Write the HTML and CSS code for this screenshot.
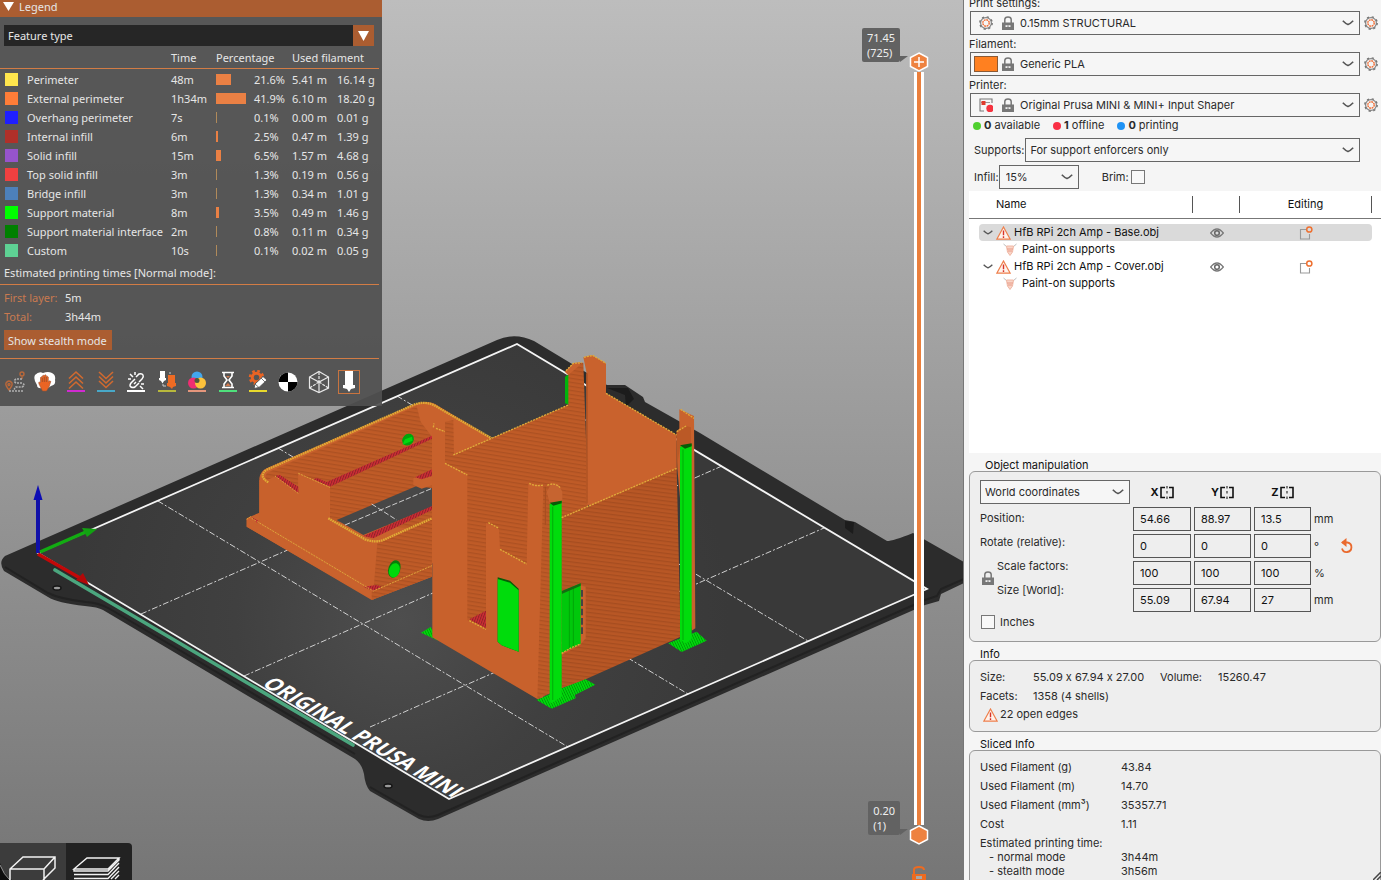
FILE: index.html
```html
<!DOCTYPE html>
<html lang="en">
<head>
<meta charset="utf-8">
<meta name="viewport" content="width=device-width, initial-scale=1">
<title>Slicer preview</title>
<link rel="stylesheet" href="styles.css">
</head>
<body>
<svg class="defs" aria-hidden="true">
  <symbol id="gear" viewBox="0 0 14 14">
    <circle cx="7" cy="7" r="5.4" fill="none" stroke="#858585" stroke-width="1.2"/>
    <circle cx="7" cy="7" r="6.2" fill="none" stroke="#757575" stroke-width="1.4" stroke-dasharray="2.2 2.67"/>
    <circle cx="7" cy="7" r="3.2" fill="none" stroke="#f06a30" stroke-width="1.4" stroke-dasharray="1.8 .7"/>
  </symbol>
  <symbol id="lock" viewBox="0 0 12 14">
    <path d="M2.8 7V3.6Q2.8 1 6 1t3.200 2.600V7" fill="none" stroke="#777" stroke-width="1.500"/>
    <path d="M0 6.500h12V14H0z" fill="#777"/>
    <path d="M3.500 9.200h5v1.800h-5z" fill="#eee"/><path d="M5.500 9.200h1v2.800h-1z" fill="#777"/>
  </symbol>
  <symbol id="chev" viewBox="0 0 12 6"><path d="M.8.8Q4 4 6 4.600 8 4 11.200.8" fill="none" stroke="#555" stroke-width="1.600"/></symbol>
  <symbol id="warn" viewBox="0 0 15 14">
    <path d="M7.500 1 14.200 13.200H.8z" fill="#fff3ec" stroke="#ee7f4c" stroke-width="1.200"/>
    <path d="M7.500 4.500v4.700M7.500 10.300v1.600" stroke="#d8332a" stroke-width="1.400"/>
  </symbol>
  <symbol id="eye" viewBox="0 0 14 10">
    <path d="M.7 5Q7-3 13.300 5 7 13 .7 5z" fill="none" stroke="#777" stroke-width="1.300"/>
    <circle cx="7" cy="5" r="2.300" fill="none" stroke="#666" stroke-width="1.500"/>
  </symbol>
  <symbol id="edit" viewBox="0 0 14 14">
    <path d="M7 3.500H1.500V13H10.500V8" fill="none" stroke="#999" stroke-width="1.100"/>
    <circle cx="10.300" cy="3.500" r="2.600" fill="none" stroke="#ee7030" stroke-width="1.500"/>
  </symbol>
  <symbol id="paint" viewBox="0 0 14 13">
    <path d="M.5 1 4 4M13.500 1 10 4" stroke="#bbb" fill="none"/>
    <path d="M3.500 3h7L9.500 9 7 12.500 4.500 9z" fill="#f9d5c8" stroke="#f0b7a4"/><path d="M4 6h6M5 8h4" stroke="#e89a86"/>
  </symbol>
  <symbol id="mirror" viewBox="0 0 14 13">
    <path d="M5 1.500H1v10h4M9 1.500h4v10H9" fill="none" stroke="#111" stroke-width="1.600"/>
    <path d="M7 0v2.500M7 5v2.500M7 10.500V13" stroke="#333" stroke-width="1.200"/>
  </symbol>
</svg>

<div class="app">
<main class="viewport">
  <svg class="scene" viewBox="0 0 964 880" preserveAspectRatio="xMinYMin slice" role="img" aria-label="Sliced model on the print bed">
    <defs>
      <linearGradient id="sky" x1="0" y1="0" x2="0" y2="1"><stop offset="0" stop-color="#bdbdbd"/><stop offset="1" stop-color="#767676"/></linearGradient>
      <radialGradient id="bed" gradientUnits="userSpaceOnUse" cx="400" cy="620" r="330"><stop offset="0" stop-color="#4e4e4e"/><stop offset=".5" stop-color="#404040"/><stop offset="1" stop-color="#393939"/></radialGradient>
      <pattern id="layers" width="40" height="12" patternUnits="userSpaceOnUse" patternTransform="rotate(9)"><path d="M0 0h40v12H0z" fill="#bf5b27"/><path d="M0 0h40v4H0z" fill="#ad5122"/></pattern>
      <pattern id="layers2" width="40" height="12" patternUnits="userSpaceOnUse" patternTransform="rotate(7)"><path d="M0 0h40v12H0z" fill="#b85725"/><path d="M0 0h40v4H0z" fill="#a64d20"/></pattern>
      <pattern id="hatch" width="7" height="7" patternUnits="userSpaceOnUse" patternTransform="rotate(-25)"><path d="M0 0h7v7H0z" fill="#00d80b"/><path d="M0 0h2v7H0z" fill="#008d08"/></pattern>
      <pattern id="red" width="7" height="7" patternUnits="userSpaceOnUse" patternTransform="rotate(20)"><path d="M0 0h7v7H0z" fill="#d02c36"/><path d="M0 0h3v7H0z" fill="#8e2427"/></pattern>
    </defs>
    <rect width="964" height="880" fill="url(#sky)"/>
    <path d="M5 556 497 340Q515 332 534 341L607 385H625L643 397 645 402 700 433 845 520 855 522 887 541Q893 541 913 533L964 562V583L941 594 939 601 925 605 438 819Q428 823 419 819L370 791Q365 785 364 774 362 764 355 759L260 703 103 610Q98 607 85 606 57 603 48 597L4 571Q-2 562 5 556z" fill="#2c2c2c"/>
    <path d="M5 567 48 593Q60 599 86 602 100 603 110 609L355 754M370 787 419 815Q428 819 438 815L925 600 937 596 941 589 964 579" fill="none" stroke="#222" stroke-width="2"/>
    <path d="M845 521v7l8 6 1-12zM607 388l18 7 1 12 8-8-6-11z" fill="#1c1c1c"/>
    <path d="M38 553 517 344 927 589 449 799z" fill="url(#bed)"/>
    <g stroke="#d0d0d0" stroke-width="1" stroke-dasharray="6 2 2 2" fill="none"><path d="M141 614 620 405M244 676 722 466M370 727 824 528M158 501 568 747M278 448 688 694M397 396 808 641"/></g>
    <path d="M38 553 517 344 927 589 449 799z" fill="none" stroke="#f4f4f4" stroke-width="1.800"/>
    <path d="M55 570 353 745" stroke="#4ba67e" stroke-width="3.600" stroke-linecap="round"/>
    <text class="bed-text" transform="translate(261 685) rotate(30.500) skewX(-26)">ORIGINAL PRUSA MINI</text>
    <g fill="#9a9a9a" stroke="#151515" stroke-width="1.500"><ellipse cx="57" cy="588" rx="4" ry="2"/><ellipse cx="388" cy="786" rx="4" ry="2"/></g>
    <path d="M38 553V499" stroke="#1010a8" stroke-width="4"/><path d="M33.500 500 38 485 42.500 500z" fill="#0c0cb4"/>
    <path d="M40 552 88 531" stroke="#12ac12" stroke-width="3.500"/><path d="M82 528 97 529 87 537z" fill="#12a212"/>
    <path d="M38 554 80 578" stroke="#c20808" stroke-width="3.500"/><path d="M83 573 89 585 76 580z" fill="#b40808"/>

    <g transform="translate(230 330) scale(.333333)">
      <path d="M50 565 88 548V445Q90 425 110 415L545 226Q595 205 625 228L785 325V700H606V740L425 810 50 590z" fill="#c9622d"/>
      <path d="M110 450Q100 435 118 425L560 228 572 275 606 320V600L320 575 300 565V470L205 430V490L135 440z" fill="url(#layers)"/>
      <path d="M320 570 560 468 606 475V530L400 615z" fill="#474747"/>
      <path d="M345 585 606 475M425 522 500 570" stroke="#ccc" stroke-width="3" stroke-dasharray="16 6"/>
      <path d="M550 445 606 420V465L575 476 550 465z" fill="#c9622d"/><path d="M555 442 606 418V438L575 448z" fill="url(#red)"/>
      <path d="M135 438 205 490 200 470 150 436zM250 448 300 470 606 326V317L290 456 262 444z" fill="url(#red)"/>
      <path d="M400 618 606 528V540L430 625z" fill="url(#red)"/>
      <path d="M88 450 115 457 135 440 205 492V430L300 472 295 565 405 630 442 638V782L88 572z" fill="#c8612c"/>
      <path d="M135 438 150 436 205 470V490z" fill="url(#red)"/>
      <path d="M442 638 462 632 606 565V710L430 785z" fill="url(#layers)"/>
      <path d="M50 568 430 788V810L50 590z" fill="#c9622d"/><path d="M425 786 606 707V740L425 810z" fill="url(#layers)"/>
      <path d="M65 562 85 572 82 580zM400 770 440 765 455 770 430 783z" fill="url(#red)"/>
      <g fill="none" stroke="#e0ab35" stroke-width="7" stroke-dasharray="5 2"><path d="M115 457Q85 440 108 420L550 225Q590 208 630 236L785 325M295 565 405 628Q435 639 460 630L606 565"/></g>
      <path d="M135 438 205 490M205 430 300 472M65 565 430 783 606 707M50 568 65 558" fill="none" stroke="#dca43a" stroke-width="3" stroke-dasharray="6 3"/>
      <ellipse cx="534" cy="329" rx="19" ry="16" transform="rotate(-45 534 329)" fill="#00a50b"/><path d="M517 344 548 332 546 320 525 328z" fill="#00d90f"/>
      <ellipse cx="493" cy="717" rx="18" ry="27" transform="rotate(18 493 717)" fill="#087c0a"/><ellipse cx="493" cy="721" rx="16" ry="22" transform="rotate(18 493 721)" fill="#00d80b"/>
    </g>

    <g transform="translate(410 340) scale(.333333)">
      <path d="M33 878 62 861 85 902z" fill="url(#hatch)"/>
      <path d="M465 110 480 100V195L465 190z" fill="#00b30b"/>
      <path d="M105 370 130 345 475 195V105L465 95 490 70 520 68 535 500 455 540 400 700 230 870 170 850V400z" fill="url(#layers)"/>
      <path d="M465 95 490 70 510 66V75L475 105z" fill="#c9622d"/>
      <path d="M520 52 545 45 588 70V160L800 285V390L540 500 530 490V100z" fill="#c9622d"/>
      <path d="M531 100V490" stroke="#b35525" stroke-width="5"/>
      <path d="M455 535 800 385 812 890 500 1030 455 1045z" fill="url(#layers2)"/>
      <path d="M105 245 130 240 132 345 105 370z" fill="url(#layers)"/>
      <path d="M178 838 228 812V865z" fill="url(#red)"/>
      <path d="M67 260 85 270 105 275V370L172 405V840L228 868V548L267 568 270 628 350 672 355 430 400 438V1073L382 1077 67 892z" fill="#c8612c"/>
      <path d="M400 440 420 430 445 433 455 450V1045L382 1077z" fill="url(#layers)"/>
      <path d="M410 455 425 430 445 433 457 455V487L420 492z" fill="#c66430"/>
      <path d="M406 440V555" stroke="#a54e20" stroke-width="3"/>
      <path d="M263 712 300 722 326 746V935L275 916 263 905z" fill="#075c08"/><path d="M263 717 300 728 326 751V935L275 916 263 905z" fill="#00dc0c"/>
      <path d="M510 735 527 740V895L510 915 455 945V935z" fill="#c9622d"/>
      <path d="M455 755 512 730V912L455 940z" fill="#00c80b"/><path d="M478 750V928M490 742V922" stroke="#00a508" stroke-width="3"/><path d="M455 753 512 730V737L455 762z" fill="#136c12"/>
      <path d="M516 750V890" stroke="#444" stroke-width="6" stroke-dasharray="20 8"/>
      <path d="M380 1080 420 1062V1050L455 1045 527 1018 556 1034 495 1065 497 1075 425 1106z" fill="url(#hatch)"/>
      <path d="M419 492 455 483V1070L425 1090 419 1085z" fill="#00dc0c"/><path d="M419 488 455 482V490L430 497z" fill="#075c08"/><path d="M428 500V1080" stroke="#00b70a" stroke-width="4"/>
      <path d="M808 208 852 228 856 865 845 872 802 385 800 275 808 265z" fill="#c9622d"/>
      <path d="M800 275 825 257 843 262V315L810 322 800 385z" fill="#bb5926"/>
      <path d="M775 910 860 875 890 902 815 936z" fill="url(#hatch)"/>
      <path d="M810 320 845 312V898L828 910 810 900z" fill="#00dc0c"/><path d="M810 316 845 310V319L825 326z" fill="#075c08"/><path d="M819 328V900" stroke="#00b70a" stroke-width="4"/>
      <g fill="none" stroke="#e0ab3a" stroke-width="4" stroke-dasharray="6 3"><path d="M130 345 475 195M588 160 800 285M455 533 800 385M105 370 172 405M235 548 267 565M270 628 350 672M178 842 228 868M70 262 72 250M78 265 105 275M358 430Q375 440 400 435M412 436Q435 425 452 445M522 52 548 46 588 70M812 208 852 235M800 275 830 257M468 92 490 70 515 68M455 940 480 925 512 912"/></g>
    </g>
  </svg>

  <section class="legend">
    <h1 class="legend-title"><svg width="11" height="9" viewBox="0 0 11 9"><path d="M0 0h11L5.500 9z" fill="#fff"/></svg>Legend</h1>
    <div class="legend-body">
      <div class="legend-combo">
        <select aria-label="View type"><option>Feature type</option></select>
        <span class="combo-arrow"><svg width="11" height="10" viewBox="0 0 11 10"><path d="M0 0h11L5.500 10z" fill="#fff"/></svg></span>
      </div>
      <table class="features">
        <colgroup><col class="c-sw"><col class="c-name"><col class="c-time"><col class="c-bar"><col class="c-pct"><col class="c-len"><col></colgroup>
        <thead><tr><th></th><th></th><th>Time</th><th colspan="2">Percentage</th><th colspan="2">Used filament</th></tr></thead>
        <tbody>
          <tr><td><i class="sw" style="background:#ffe64d"></i></td><td>Perimeter</td><td>48m</td><td><i class="bar" style="width:15px"></i></td><td>21.6%</td><td>5.41 m</td><td>16.14 g</td></tr>
          <tr><td><i class="sw" style="background:#ff7d38"></i></td><td>External perimeter</td><td>1h34m</td><td><i class="bar" style="width:30px"></i></td><td>41.9%</td><td>6.10 m</td><td>18.20 g</td></tr>
          <tr><td><i class="sw" style="background:#1f1fff"></i></td><td>Overhang perimeter</td><td>7s</td><td><i class="bar thin" style="width:1px"></i></td><td>0.1%</td><td>0.00 m</td><td>0.01 g</td></tr>
          <tr><td><i class="sw" style="background:#b03029"></i></td><td>Internal infill</td><td>6m</td><td><i class="bar" style="width:2px"></i></td><td>2.5%</td><td>0.47 m</td><td>1.39 g</td></tr>
          <tr><td><i class="sw" style="background:#9654cc"></i></td><td>Solid infill</td><td>15m</td><td><i class="bar" style="width:5px"></i></td><td>6.5%</td><td>1.57 m</td><td>4.68 g</td></tr>
          <tr><td><i class="sw" style="background:#f04040"></i></td><td>Top solid infill</td><td>3m</td><td><i class="bar thin" style="width:1px"></i></td><td>1.3%</td><td>0.19 m</td><td>0.56 g</td></tr>
          <tr><td><i class="sw" style="background:#4d80ba"></i></td><td>Bridge infill</td><td>3m</td><td><i class="bar thin" style="width:1px"></i></td><td>1.3%</td><td>0.34 m</td><td>1.01 g</td></tr>
          <tr><td><i class="sw" style="background:#00ff00"></i></td><td>Support material</td><td>8m</td><td><i class="bar" style="width:3px"></i></td><td>3.5%</td><td>0.49 m</td><td>1.46 g</td></tr>
          <tr><td><i class="sw" style="background:#008000"></i></td><td>Support material interface</td><td>2m</td><td><i class="bar thin" style="width:1px"></i></td><td>0.8%</td><td>0.11 m</td><td>0.34 g</td></tr>
          <tr><td><i class="sw" style="background:#5ed194"></i></td><td>Custom</td><td>10s</td><td><i class="bar thin" style="width:1px"></i></td><td>0.1%</td><td>0.02 m</td><td>0.05 g</td></tr>
        </tbody>
      </table>
      <h2 class="times-title">Estimated printing times [Normal mode]:</h2>
      <dl class="times"><dt>First layer:</dt><dd>5m</dd><dt>Total:</dt><dd>3h44m</dd></dl>
      <button class="stealth" type="button">Show stealth mode</button>
      <div class="toggles">
        <button type="button" aria-label="Travel"><svg viewBox="0 0 22 24"><g fill="none" stroke="#b9683a" stroke-width="1.400"><circle cx="18" cy="4" r="2"/><path d="M18 6.500V9M5 20Q1 15 2 13q3-4 6 0 1 2-3 7z"/><circle cx="5" cy="14.500" r="1"/></g><path d="M18 9H12q-3 2 0 4h6q4 2 0 4h-6q-3 2 0 4M5 21h14" fill="none" stroke="#b0b0b0" stroke-width="1.600" stroke-dasharray="2 1"/></svg></button>
        <button type="button" aria-label="Wipe"><svg viewBox="0 0 22 24"><path d="M1 5q4-4 8-2 5-2 9 0 4 2 3 7 1 5-4 6-3 3-8 2-6 1-6-3Q-1 9 1 5z" fill="#fff"/><path d="M5 14q-1-3 1.500-1.500V7.500q.9-1.500 1.800 0V6q1-1.500 2 0V5.500q1-1.500 2 0V7q1-1.500 2 0v5q1.500-2 2.500-.5L15 17l-2.500 4H8.500z" fill="#ea6424" stroke="#9a5433" stroke-width=".6"/><path d="M8.300 8v4M10.300 7v5M12.300 7v5" stroke="#8a4a2a" stroke-width=".7"/></svg></button>
        <button type="button" aria-label="Retractions"><svg viewBox="0 0 22 24"><g fill="none" stroke="#d06a30" stroke-width="1.600"><path d="M4 8.500 11 2l7 6.500M4 13.500 11 7l7 6.500M4 18.500 11 12l7 6.500"/></g><path d="M2 20h18v2H2z" fill="#d02bd0"/></svg></button>
        <button type="button" aria-label="Deretractions"><svg viewBox="0 0 22 24"><g fill="none" stroke="#d06a30" stroke-width="1.600"><path d="M4 2 11 8.500 18 2M4 6.500 11 13l7-6.500M4 11 11 17.500 18 11"/></g><path d="M2 20h18v2H2z" fill="#48a8c8"/></svg></button>
        <button type="button" aria-label="Seams"><svg viewBox="0 0 22 24"><g fill="none" stroke="#fff" stroke-width="1.500"><path d="M11 7 14 4q3-1 4 1 1 2-1 4l-3 3M10 9 6 13q-2 3 0 4t4 0l4-4M9 14l2-2M5 4l3 3M10 2v3M3 9h3M16 14h3M15 16l3 3"/></g><path d="M2 20h18v2H2z" fill="#fff"/></svg></button>
        <button type="button" aria-label="Tool changes"><svg viewBox="0 0 22 24"><path d="M4 1h5v7h1v2L8 11 6.500 13.500 5 11 3 10V8h1z" fill="#fff"/><path d="M12 5h7v8h1v3l-3 1-1 2-2-2-3-1v-3h1z" fill="#ee6b24"/><path d="M7 14v2h3M13 3h2" fill="none" stroke="#ccc"/><path d="M2 20h18v2H2z" fill="#b8b83c"/></svg></button>
        <button type="button" aria-label="Color changes"><svg viewBox="0 0 22 24"><circle cx="11" cy="7" r="5.500" fill="#42a7ee"/><circle cx="7.500" cy="13" r="5.500" fill="#f02d72"/><circle cx="14.500" cy="13" r="5.500" fill="#fcc23b"/><circle cx="11" cy="10.500" r="2.500" fill="#51583a"/><path d="M2 20h18v2H2z" fill="#e5967c"/></svg></button>
        <button type="button" aria-label="Pause prints"><svg viewBox="0 0 22 24"><path d="M5 2.500h12M5 17.500h12M7 3v3l3 4-3 4v3M15 3v3l-3 4 3 4v3" fill="none" stroke="#fff" stroke-width="1.600"/><path d="M9 6h4l-2 2zM8 16l3-3 3 3z" fill="#cf7a50"/><path d="M2 20h18v2H2z" fill="#4fe07c"/></svg></button>
        <button type="button" aria-label="Custom G-code"><svg viewBox="0 0 22 24"><circle cx="9.500" cy="7.500" r="6.500" fill="none" stroke="#ea6424" stroke-width="2.500" stroke-dasharray="2.600 2.500"/><circle cx="9.500" cy="7.500" r="4.300" fill="none" stroke="#ea6424" stroke-width="3"/><path d="M7 18.500 8 14 16 6.500l4 3.500-8 7.500z" fill="#fff" stroke="#555" stroke-width="1"/><path d="M14 8l4 4M8 14l4 3.500" stroke="#555" stroke-width=".8"/><path d="M2 20h18v2H2z" fill="#e8d92c"/></svg></button>
        <button type="button" aria-label="Center of gravity"><svg viewBox="0 0 22 24"><circle cx="11" cy="12" r="9.500" fill="#fff"/><path d="M11 12V2.500A9.500 9.500 0 0 0 1.500 12zM11 12v9.500A9.500 9.500 0 0 0 20.500 12z" fill="#000"/></svg></button>
        <button type="button" aria-label="Shells"><svg viewBox="0 0 22 24"><g fill="none" stroke="#e8e8e8" stroke-width="1.200"><path d="M11 1.500 20.500 7v11L11 22.500 1.500 18V7z"/><path d="M1.500 7 11 12l9.500-5M11 12v10.500"/><path d="M11 12 1.500 18M11 12l9.500 6M11 2v10" stroke-dasharray="3 1"/></g></svg></button>
        <button type="button" class="on" aria-label="Tool marker" aria-pressed="true"><svg viewBox="0 0 22 24"><path d="M7 1h8v14h2v3l-4 1-2 3-2-3-4-1v-3h2z" fill="#fff"/></svg></button>
      </div>
    </div>
  </section>

  <div class="layers">
    <output class="tip tip-top">71.45<br>(725)</output>
    <svg class="thumb" viewBox="0 0 20 20"><path d="M10 1 18.500 5.500v9L10 19 1.500 14.500v-9z" fill="#ee8240" stroke="#fff" stroke-width="1.500"/><path d="M10 5v10M5 10h10" stroke="#fff" stroke-width="1.500"/></svg>
    <div class="track">
      <input type="range" min="1" max="725" value="725" aria-label="Top layer">
      <input type="range" min="1" max="725" value="1" aria-label="Bottom layer">
    </div>
    <svg class="thumb" viewBox="0 0 20 20"><path d="M10 1 18.500 5.500v9L10 19 1.500 14.500v-9z" fill="#ee8240" stroke="#fff" stroke-width="1.500"/></svg>
    <output class="tip tip-bottom">0.20<br>(1)</output>
    <svg class="slider-lock" viewBox="0 0 16 16"><path d="M3 8V3.500Q3 1 8 1t5 3" fill="none" stroke="#ed6b21" stroke-width="2"/><path d="M1 8h14v8H1z" fill="#ed6b21"/><path d="M5 10h6v3H5z" fill="#a8a8a8"/></svg>
  </div>

  <nav class="views">
    <button type="button" aria-label="3D editor view"><svg viewBox="0 0 66 37"><path d="M0 20Q3 31 12 37H0z" fill="#0c0c0c"/><path d="M0 22Q4 32 10 37" fill="none" stroke="#999"/><path d="M10 37V26L23 14H55V25L43 37M10 26H44V37M44 26 55 14" fill="none" stroke="#f2f2f2" stroke-width="1.500"/></svg></button>
    <button type="button" class="active" aria-label="Preview"><svg viewBox="0 0 66 37"><g fill="none" stroke="#f2f2f2" stroke-width="1.400"><path d="M8 26 21 15H53L42 26zM8 26v2h34L53 17v-2"/><path d="M8 31.500H42L53 20M8 35.500H42L53 24M45 36 53 28M49 36 53 32"/></g></svg></button>
  </nav>
</main>

<aside class="sidebar">
  <div class="presets">
    <label class="cap" for="print">Print settings:</label>
    <div class="preset"><div class="combo"><svg class="i-gear lead"><use href="#gear"/></svg><svg class="i-lock"><use href="#lock"/></svg><select id="print"><option>0.15mm STRUCTURAL</option></select><svg class="i-chev"><use href="#chev"/></svg></div><button type="button" aria-label="Edit print settings"><svg class="i-gear"><use href="#gear"/></svg></button></div>
    <label class="cap" for="fil">Filament:</label>
    <div class="preset"><div class="combo"><i class="fil-color"></i><svg class="i-lock"><use href="#lock"/></svg><select id="fil"><option>Generic PLA</option></select><svg class="i-chev"><use href="#chev"/></svg></div><button type="button" aria-label="Edit filament"><svg class="i-gear"><use href="#gear"/></svg></button></div>
    <label class="cap" for="prn">Printer:</label>
    <div class="preset"><div class="combo"><svg class="i-gear lead" viewBox="0 0 14 14"><path d="M13 5V1H1v12h4" fill="none" stroke="#777" stroke-width="1.100"/><path d="M2 4.500h9" stroke="#999"/><path d="M2.500 3h4v4h-4z" fill="#e03a2c"/><circle cx="11" cy="10.500" r="3.700" fill="#f5333f"/></svg><svg class="i-lock"><use href="#lock"/></svg><select id="prn"><option>Original Prusa MINI &amp; MINI+ Input Shaper</option></select><svg class="i-chev"><use href="#chev"/></svg></div><button type="button" aria-label="Edit printer"><svg class="i-gear"><use href="#gear"/></svg></button></div>
  </div>
  <ul class="status"><li class="ok"><b>0</b> available</li><li class="off"><b>1</b> offline</li><li class="busy"><b>0</b> printing</li></ul>
  <div class="line"><label for="sup">Supports:</label><div class="combo wide"><select id="sup"><option>For support enforcers only</option></select><svg class="i-chev"><use href="#chev"/></svg></div></div>
  <div class="line"><label for="inf">Infill:</label><div class="combo infill"><select id="inf"><option>15%</option></select><svg class="i-chev"><use href="#chev"/></svg></div><label class="brim" for="brim">Brim:</label><input type="checkbox" id="brim"></div>

  <div class="objects">
    <table>
      <colgroup><col class="o-pad"><col><col class="o-eye"><col class="o-edit"><col class="o-end"></colgroup>
      <thead><tr><th></th><th class="name"><span>Name</span></th><th><span></span></th><th><span>Editing</span></th><th></th></tr></thead>
      <tbody>
        <tr class="sel"><td></td><td><div class="node"><svg class="i-tree"><use href="#chev"/></svg><svg class="i-warn"><use href="#warn"/></svg>HfB RPi 2ch Amp - Base.obj</div></td><td><svg class="i-eye"><use href="#eye"/></svg></td><td><svg class="i-edit"><use href="#edit"/></svg></td><td></td></tr>
        <tr><td></td><td><div class="node child"><svg class="i-paint"><use href="#paint"/></svg>Paint-on supports</div></td><td></td><td></td><td></td></tr>
        <tr><td></td><td><div class="node"><svg class="i-tree"><use href="#chev"/></svg><svg class="i-warn"><use href="#warn"/></svg>HfB RPi 2ch Amp - Cover.obj</div></td><td><svg class="i-eye"><use href="#eye"/></svg></td><td><svg class="i-edit"><use href="#edit"/></svg></td><td></td></tr>
        <tr><td></td><td><div class="node child"><svg class="i-paint"><use href="#paint"/></svg>Paint-on supports</div></td><td></td><td></td><td></td></tr>
      </tbody>
    </table>
  </div>

  <section class="group">
    <h2 class="indent">Object manipulation</h2>
    <div class="box manip">
      <div class="manip-cols">
        <div class="manip-labels">
          <div class="combo"><select aria-label="Coordinates"><option>World coordinates</option></select><svg class="i-chev"><use href="#chev"/></svg></div>
          <span id="l-pos">Position:</span><span id="l-rot">Rotate (relative):</span>
          <div class="scale"><svg class="i-lock"><use href="#lock"/></svg><div><span id="l-sc">Scale factors:</span><span id="l-size">Size [World]:</span></div></div>
        </div>
        <div class="manip-grid">
          <button type="button" class="axis">X<svg class="i-mirror"><use href="#mirror"/></svg></button><button type="button" class="axis">Y<svg class="i-mirror"><use href="#mirror"/></svg></button><button type="button" class="axis">Z<svg class="i-mirror"><use href="#mirror"/></svg></button><span></span><span></span>
          <input aria-labelledby="l-pos" value="54.66"><input aria-labelledby="l-pos" value="88.97"><input aria-labelledby="l-pos" value="13.5"><span>mm</span><span></span>
          <input aria-labelledby="l-rot" value="0"><input aria-labelledby="l-rot" value="0"><input aria-labelledby="l-rot" value="0"><span>°</span><button type="button" class="reset" aria-label="Reset rotation"><svg viewBox="0 0 14 16"><path d="M2.500 4.500H7.500A4.800 4.800 0 1 1 2 10.500" fill="none" stroke="#ea6a2e" stroke-width="1.800"/><path d="M6.500 0V9L1 4.500z" fill="#ea6a2e"/></svg></button>
          <input aria-labelledby="l-sc" value="100"><input aria-labelledby="l-sc" value="100"><input aria-labelledby="l-sc" value="100"><span>%</span><span></span>
          <input aria-labelledby="l-size" value="55.09"><input aria-labelledby="l-size" value="67.94"><input aria-labelledby="l-size" value="27"><span>mm</span><span></span>
        </div>
      </div>
      <label class="inches"><input type="checkbox"> Inches</label>
    </div>
  </section>

  <section class="group">
    <h2>Info</h2>
    <div class="box">
      <dl class="info"><dt>Size:</dt><dd>55.09 x 67.94 x 27.00</dd><dt>Volume:</dt><dd>15260.47</dd><dt>Facets:</dt><dd>1358 (4 shells)</dd></dl>
      <p class="edges"><svg class="i-warn"><use href="#warn"/></svg>22 open edges</p>
    </div>
  </section>

  <section class="group last">
    <h2>Sliced Info</h2>
    <div class="box">
      <dl class="sliced"><dt>Used Filament (g)</dt><dd>43.84</dd><dt>Used Filament (m)</dt><dd>14.70</dd><dt>Used Filament (mm³)</dt><dd>35357.71</dd><dt>Cost</dt><dd>1.11</dd></dl>
      <dl class="sliced est"><dt>Estimated printing time:</dt><dd></dd><dt class="sub">- normal mode</dt><dd>3h44m</dd><dt class="sub">- stealth mode</dt><dd>3h56m</dd></dl>
    </div>
    <svg class="grip" viewBox="0 0 8 8"><path d="M0 8 8 0M4 8 8 4" stroke="#444" stroke-width="1.500"/></svg>
  </section>
</aside>
</div>
</body>
</html>
```
FILE: styles.css
```css
* { box-sizing: border-box; }
body { margin: 0; font: 11px/17px Inter, "Liberation Sans", sans-serif; font-feature-settings: "calt" 0; color: #2a2a2a; }
h1, h2, dl, dd, ul, p { margin: 0; padding: 0; font-size: inherit; font-weight: inherit; list-style: none; }
button, input, select { margin: 0; padding: 0; border: 0; background: none; color: inherit; font: inherit; }
select, input[type="checkbox"] { appearance: none; }
svg { display: block; flex: none; }
.defs { position: absolute; width: 0; height: 0; }
table { border-collapse: separate; border-spacing: 0; table-layout: fixed; width: 100%; }
th, td { padding: 0; font-weight: inherit; text-align: left; }

.app { display: grid; grid-template-columns: minmax(0, 1fr) 417px; height: 100vh; overflow: hidden; }
.viewport { position: relative; overflow: hidden; background: #999; border-right: 1px solid #777; font-family: "Noto Sans", sans-serif; }
.scene { position: absolute; inset: 0; width: 100%; height: 100%; }
.bed-text { font: bold 20px "Open Sans", sans-serif; fill: #fff; }

/* Legend overlay */
.legend { position: absolute; top: 0; left: 0; width: 382px; background: rgba(80, 80, 80, .93); color: #e6e6e6; }
.legend-title { display: flex; align-items: center; gap: 5px; height: 17px; padding: 0 3px 4px; background: #ab5d31; }
.legend-body { padding: 8px 3px 0 0; }
.legend-combo { display: flex; margin: 0 5px 1px 4px; height: 21px; background: #262626; }
.legend-combo select { flex: 1; padding-left: 4px; }
.combo-arrow { display: grid; place-items: center; width: 21px; background: #ab5d31; }
.features th { height: 22px; border-bottom: 1px solid #d27c45; }
.features tbody::before { content: ""; display: block; height: 1px; }
.features td { height: 19px; line-height: 19px; white-space: nowrap; }
.c-sw { width: 27px; } .c-name { width: 144px; } .c-time { width: 45px; }
.c-bar, .c-pct { width: 38px; } .c-len { width: 45px; }
.sw { display: block; width: 13px; height: 13px; margin-left: 5px; }
.bar { display: block; height: 11px; background: #ea8044; }
.bar.thin { background: #b08a5a; }
.times-title { height: 25px; padding: 4px 4px 0; border-bottom: 1px solid #d27c45; }
.times { display: grid; grid-template-columns: 61px 1fr; padding: 3px 4px 0; line-height: 19px; }
.times dt { color: #c97a50; }
.stealth { margin: 4px 0 8px 4px; padding: 0 5px 0 4px; height: 20px; background: #ab5d31; }
.toggles { display: flex; justify-content: space-between; padding: 11px 19px 12px 4px; border-top: 1px solid #d27c45; }
.toggles button { width: 22px; height: 24px; }
.toggles svg { width: 22px; height: 24px; }
.toggles .on { outline: 1px solid #c9743f; outline-offset: -1px; }

/* Layer slider */
.layers { position: absolute; top: 52px; bottom: 0; right: 34px; width: 20px; display: flex; flex-direction: column; align-items: center; }
.thumb { width: 20px; height: 20px; }
.track { position: relative; flex: 1; width: 10px; border: solid #fff; border-width: 0 3px; background: #ea7f3c; }
.track input { position: absolute; inset: 0; width: 100%; height: 100%; writing-mode: vertical-lr; direction: rtl; opacity: 0; }
.slider-lock { width: 16px; height: 16px; margin: 21px 0 -2px; }
.tip { position: absolute; right: 29px; padding: 2px 5px; border-radius: 2px; background: #626262; color: #eee; line-height: 15px; }
.tip::after { content: ""; position: absolute; left: 100%; bottom: 0; border: solid transparent; border-width: 6px 0 0 8px; border-top-width: 6px; border-bottom-width: 0; border-left-color: #626262; transform: scaleY(-1); }
.tip-top { top: -24px; }
.tip-bottom { bottom: 45px; }

.views { position: absolute; left: 0; bottom: 0; display: flex; border-radius: 0 4px 0 0; overflow: hidden; }
.views button { width: 66px; height: 37px; background: #3c3c3c; }
.views .active { background: #222; }

/* Sidebar */
.sidebar { display: flex; flex-direction: column; min-width: 0; padding-left: 5px; overflow: hidden; background: #f5f5f5; }
.presets { margin-top: -6px; }
.cap { display: block; height: 17px; padding-top: 1px; }
.preset { display: flex; align-items: center; gap: 4px; padding-right: 3px; margin-left: 1px; }
.combo { display: flex; align-items: center; flex: 1; height: 24px; padding-right: 5px; border: 1px solid #666; background: #f6f6f6; min-width: 0; }
.combo select { flex: 1; min-width: 0; padding-left: 4px; margin-right: -12px; }
.preset .combo select, .infill select { padding-left: 6px; }
.i-gear { width: 14px; height: 14px; }
.lead { margin: 0 9px 0 8px; }
.i-lock { width: 12px; height: 14px; }
.i-chev { width: 12px; height: 6px; pointer-events: none; }
.fil-color { width: 24px; height: 16px; margin: 0 4px 0 3px; border: 1px solid #8b5a35; background: #ff8020; }
.status { display: flex; gap: 13px; padding: 0 0 4px 4px; }
.status li { display: flex; align-items: center; gap: 3px; }
.status li::before { content: ""; width: 8px; height: 8px; border-radius: 50%; background: #50d02f; }
.status .off::before { background: #fa2f45; }
.status .busy::before { background: #1f93f5; }
.line { display: flex; align-items: center; padding-left: 5px; margin-bottom: 3px; }
.wide { margin: 0 21px 0 1px; }
.combo.infill { flex: 0 0 80px; }
.brim { margin: 0 2px 0 23px; }
input[type="checkbox"] { width: 14px; height: 14px; border: 1px solid #777; background: #f8f8f8; }
.objects { flex: none; height: 262px; margin-top: -1px; background: #fff; color: #111; }
.objects th { height: 28px; border-bottom: 1px solid #777; }
.objects th span { display: block; height: 17px; text-align: center; }
.objects .name span { text-align: left; padding-left: 17px; border-right: 1px solid #555; }
.objects th:nth-child(3) span, .objects th:nth-child(4) span { border-right: 1px solid #555; }
.objects tbody::before { content: ""; display: block; height: 5px; }
.objects td { height: 17px; }
.o-pad { width: 10px; } .o-eye { width: 47px; } .o-edit { width: 132px; } .o-end { width: 9px; }
.sel td { background: #dadada; }
.sel td:first-child, .sel td:last-child { background: #fff; }
.sel td:nth-child(2) { border-radius: 4px 0 0 4px; }
.sel td:nth-child(4) { border-radius: 0 4px 4px 0; }
.node { display: flex; align-items: center; gap: 3px; padding-left: 4px; white-space: nowrap; }
.child { padding-left: 24px; gap: 5px; }
.i-tree { width: 10px; height: 5px; }
.i-warn { width: 15px; height: 14px; }
.i-eye { width: 14px; height: 10px; margin: 0 auto; }
.i-edit { width: 14px; height: 14px; margin: 0 auto; }
.i-paint { width: 14px; height: 13px; }

.group { flex: none; }
.group h2 { padding: 6px 11px 0; line-height: 12px; color: #111; }
.group .indent { padding-left: 16px; }
.box { padding: 7px 10px 8px; border: 1px solid #999; border-radius: 6px; background: #eee; }
.manip { padding: 8px 10px 12px; }
.manip-cols { display: flex; gap: 3px; }
.manip-labels { width: 150px; line-height: 24px; }
.manip-labels .combo { margin-bottom: 2px; line-height: 17px; }
.manip-labels span { display: block; }
.scale { display: flex; align-items: center; gap: 3px; padding-left: 2px; }
.manip-grid { display: grid; grid-template-columns: 58px 57px 57px 20px 20px; grid-auto-rows: 24px; gap: 3px; align-items: center; }
.manip-grid input { width: 100%; height: 24px; padding: 0 6px; border: 1px solid #555; color: #111; }
.axis { display: flex; justify-content: center; align-items: center; gap: 1px; font-weight: bold; color: #111; }
.i-mirror { width: 14px; height: 13px; }
.reset svg { width: 14px; height: 16px; margin: 0 auto; }
.inches { display: flex; align-items: center; gap: 5px; height: 14px; margin-top: 3px; padding-left: 1px; }
.info { display: grid; grid-template-columns: 53px 127px 58px 1fr; line-height: 19px; }
.edges { display: flex; align-items: center; gap: 2px; padding-left: 3px; }
.sliced { display: grid; grid-template-columns: 141px 1fr; line-height: 19px; }
.sliced.est { line-height: 14px; padding-top: 2px; }
.sub { padding-left: 9px; }
.last { position: relative; flex: 1; min-height: 0; overflow: hidden; }
.last .box { min-height: 160px; }
.grip { position: absolute; right: 0; bottom: 0; width: 8px; height: 8px; }
```
